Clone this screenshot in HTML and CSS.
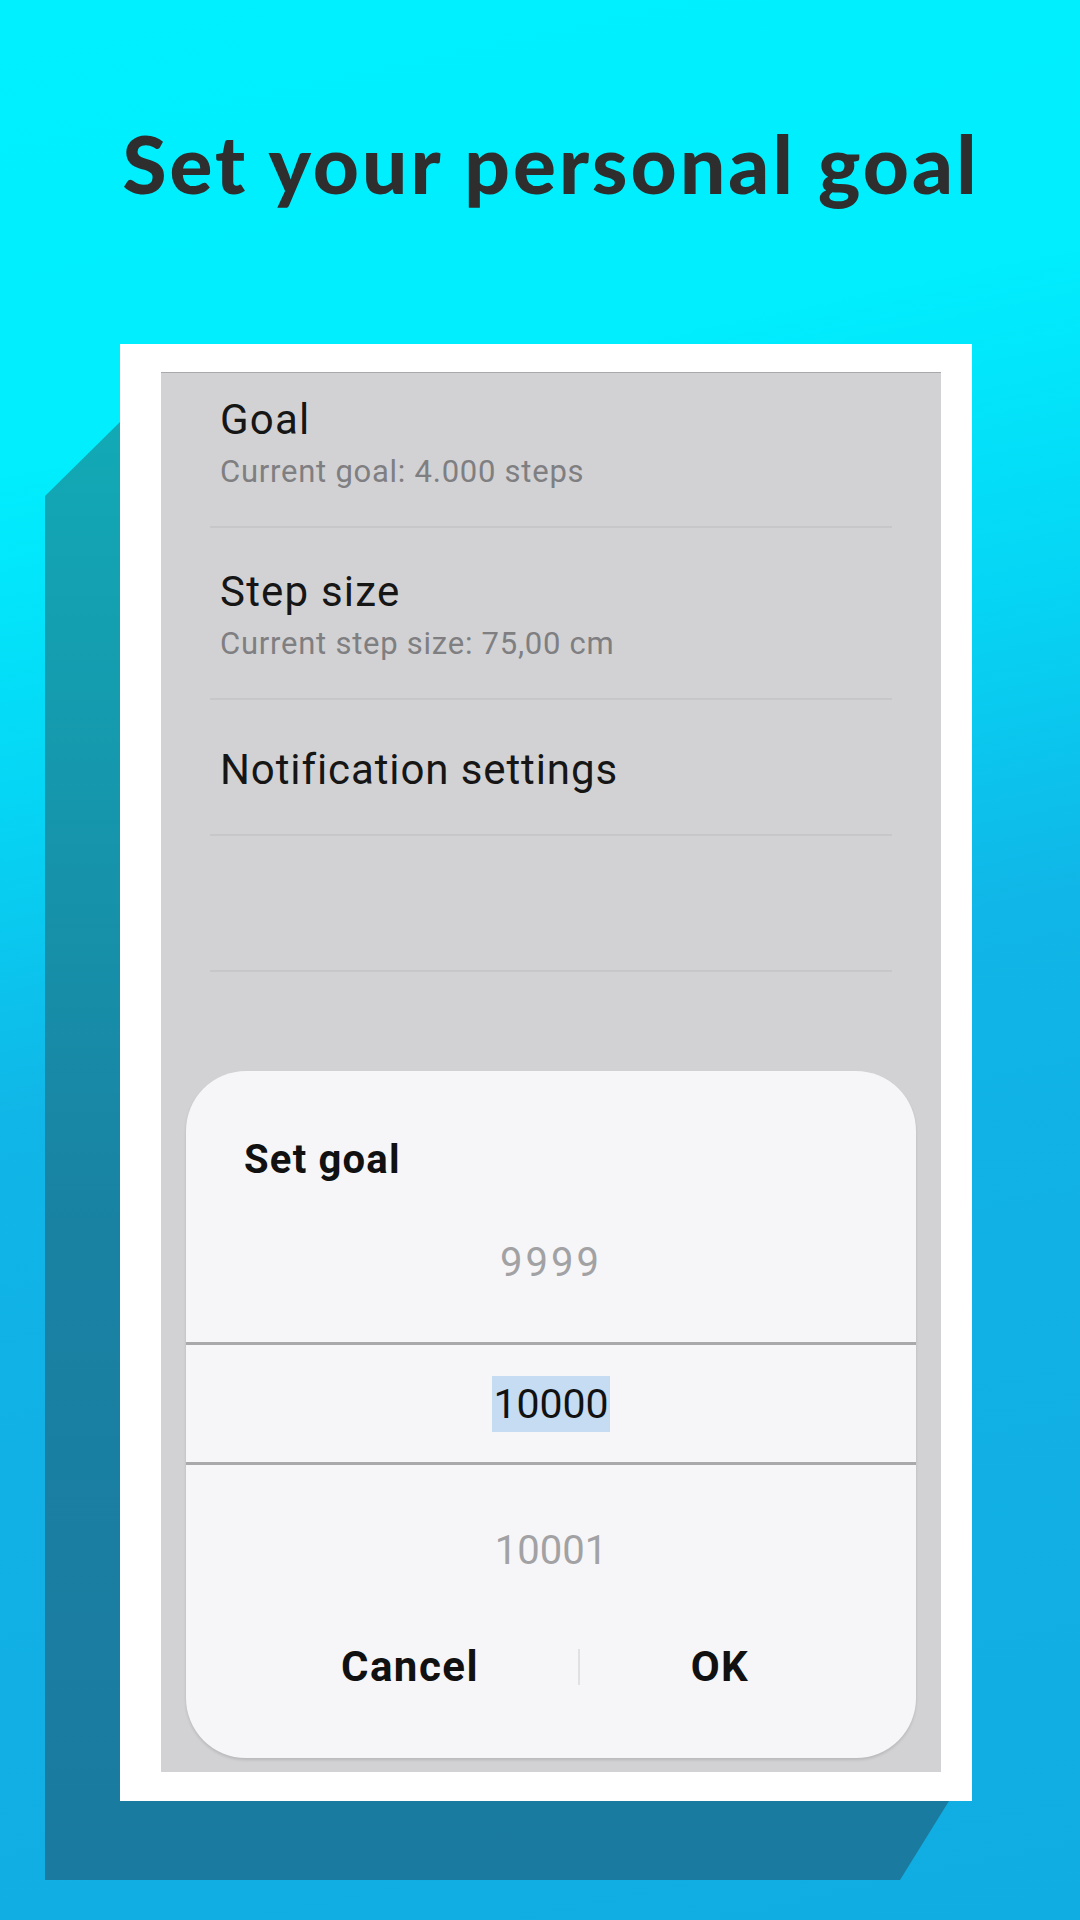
FILE: index.html
```html
<!DOCTYPE html>
<html lang="en">
<head>
<meta charset="utf-8">
<title>Set your personal goal</title>
<link rel="stylesheet" href="styles.css">
</head>
<body>
<div class="page">
  <svg class="extrude" width="1080" height="1920" viewBox="0 0 1080 1920" aria-hidden="true">
    <defs>
      <linearGradient id="sh" x1="0" y1="0" x2="0" y2="1">
        <stop offset="0" stop-color="#12a9b5"/>
        <stop offset="0.55" stop-color="#1982a3"/>
        <stop offset="1" stop-color="#1a7aa0"/>
      </linearGradient>
    </defs>
    <polygon points="120,422 45,496 45,1880 900,1880 949,1801 120,1801" fill="url(#sh)"/>
  </svg>

  <h1 class="headline">Set your personal goal</h1>

  <div class="frame">
    <div class="screen">
      <div class="item item-goal">
        <div class="item-title">Goal</div>
        <div class="item-sub">Current goal: 4.000 steps</div>
      </div>
      <div class="item item-step">
        <div class="item-title">Step size</div>
        <div class="item-sub">Current step size: 75,00 cm</div>
      </div>
      <div class="item item-notif">
        <div class="item-title">Notification settings</div>
      </div>
      <div class="item item-empty"></div>

      <div class="dialog">
        <div class="dialog-title">Set goal</div>
        <div class="pick pick-prev"><span>9999</span></div>
        <div class="pick-line"></div>
        <div class="pick pick-cur"><span class="sel">10000</span></div>
        <div class="pick-line"></div>
        <div class="pick pick-next"><span>10001</span></div>
        <div class="actions">
          <div class="btn btn-cancel">Cancel</div>
          <div class="btn-sep"></div>
          <div class="btn btn-ok">OK</div>
        </div>
      </div>
    </div>
  </div>
</div>
</body>
</html>
```

FILE: styles.css
```css
html, body {
  margin: 0;
  padding: 0;
}

body {
  width: 1080px;
  height: 1920px;
  overflow: hidden;
}

.page {
  position: relative;
  width: 1080px;
  height: 1920px;
  overflow: hidden;
  background: linear-gradient(168deg, #00f0ff 0%, #00eefe 22%, #06d4f4 38%, #10b6e7 52%, #11b0e5 70%, #10ade2 100%);
  display: flex;
  flex-direction: column;
}

.extrude {
  position: absolute;
  left: 0;
  top: 0;
  z-index: 0;
}

.headline {
  position: relative;
  z-index: 1;
  margin: 116px 0 0 0;
  padding-left: 22px;
  height: 94px;
  line-height: 94px;
  font-family: "Lato", "Liberation Sans", sans-serif;
  font-weight: 900;
  font-size: 80px;
  color: #2e2e2e;
  text-align: center;
  letter-spacing: 3.1px;
}

.frame {
  position: relative;
  z-index: 1;
  box-sizing: border-box;
  margin: 134px 0 0 120px;
  width: 852px;
  height: 1457px;
  background: #ffffff;
  padding: 28px 31px 29px 41px;
}

.screen {
  position: relative;
  box-sizing: border-box;
  width: 780px;
  height: 1400px;
  background: #d2d2d4;
  border-top: 1px solid #a9a9ab;
  display: flex;
  flex-direction: column;
  font-family: Roboto, "Noto Sans", sans-serif;
}

.item {
  box-sizing: border-box;
  margin: 0 49px;
  padding-left: 10px;
  border-bottom: 2px solid #c7c7c9;
}

.item-goal { height: 155px; padding-top: 23px; }
.item-step { height: 172px; padding-top: 40px; }
.item-notif { height: 136px; padding-top: 46px; }
.item-empty { height: 136px; }

.item-title {
  font-size: 42px;
  line-height: 48px;
  letter-spacing: 1.2px;
  color: #161616;
}

.item-notif .item-title {
  letter-spacing: 0.9px;
}

.item-sub {
  margin-top: 8px;
  font-size: 31px;
  line-height: 40px;
  letter-spacing: 0.75px;
  color: #7f7f82;
}

.dialog {
  position: absolute;
  left: 25px;
  right: 25px;
  bottom: 14px;
  box-sizing: border-box;
  height: 687px;
  background: #f6f6f8;
  border-radius: 60px;
  box-shadow: 0 2px 3px rgba(0, 0, 0, 0.12);
  padding-top: 66px;
  display: flex;
  flex-direction: column;
  overflow: hidden;
}

.dialog-title {
  padding-left: 58px;
  height: 45px;
  font-size: 40px;
  line-height: 45px;
  font-weight: 700;
  letter-spacing: 1.2px;
  color: #111111;
}

.pick {
  display: flex;
  align-items: center;
  justify-content: center;
  font-size: 40px;
  color: #a2a2a4;
}

.pick-prev { height: 160px; letter-spacing: 3px; }
.pick-cur { height: 117px; color: #111111; font-size: 41px; }
.pick-next { height: 170px; }

.sel {
  background: #c5dcf3;
  line-height: 56px;
  padding: 0 1px;
}

.pick-line {
  height: 3px;
  background: #a9a9ab;
}

.actions {
  display: flex;
  align-items: center;
  height: 64px;
  padding-left: 56px;
}

.btn {
  font-size: 42px;
  font-weight: 700;
  letter-spacing: 1.5px;
  color: #111111;
  text-align: center;
  line-height: 64px;
}

.btn-cancel { width: 336px; }
.btn-ok { width: 280px; }

.btn-sep {
  width: 2px;
  height: 36px;
  background: #e1e1e3;
}
```
